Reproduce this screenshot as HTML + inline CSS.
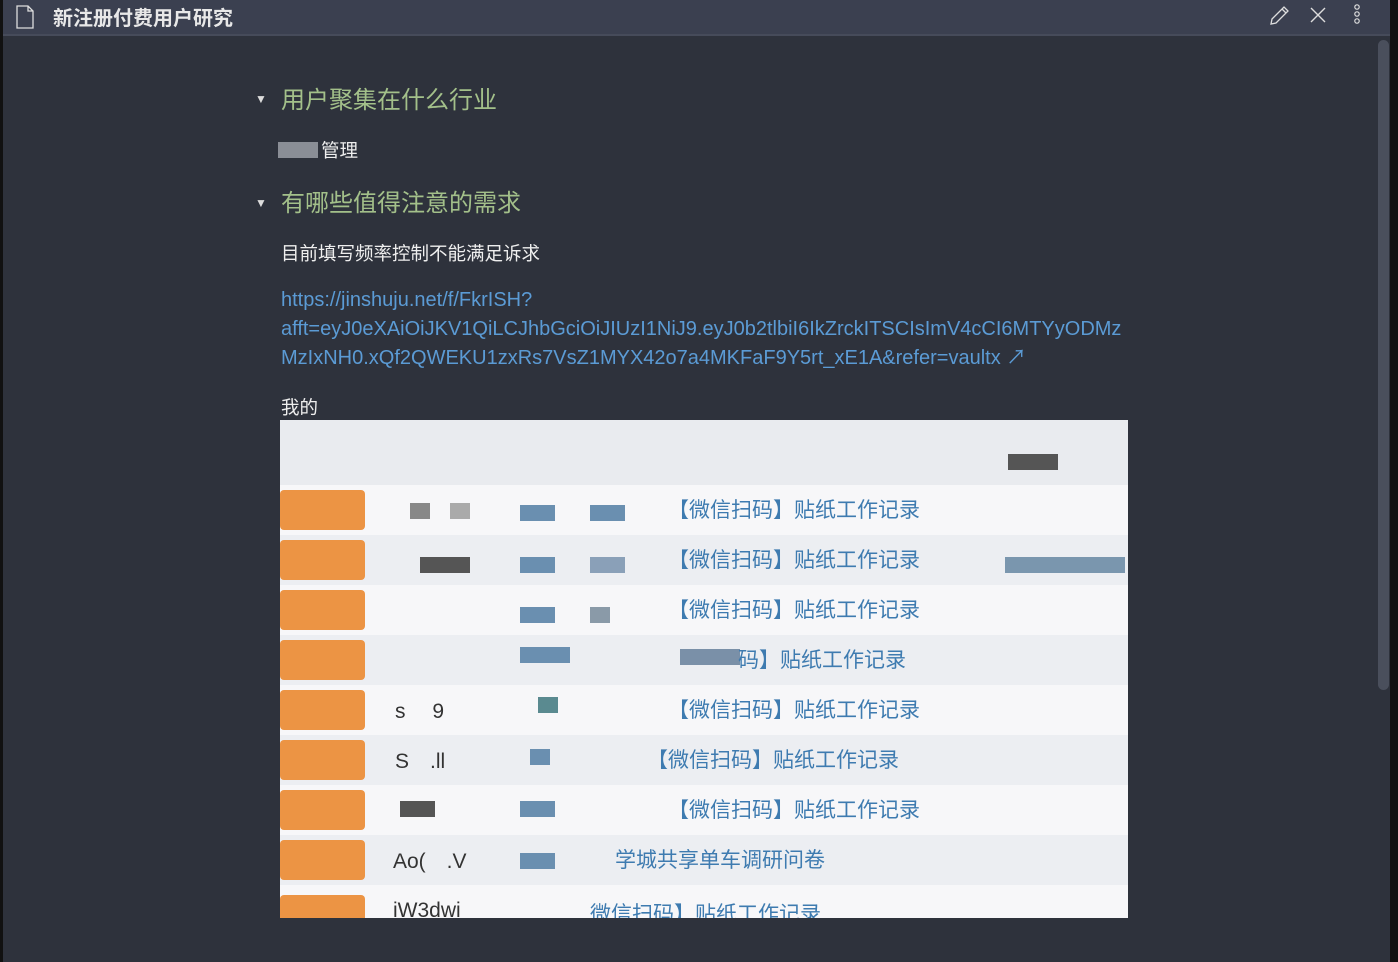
<!DOCTYPE html>
<html><head><meta charset="utf-8"><style>
*{margin:0;padding:0;box-sizing:border-box}
body{width:1398px;height:962px;background:#2e323c;font-family:"Liberation Sans","Noto Sans CJK SC",sans-serif;position:relative;overflow:hidden}
.hdr{position:absolute;left:3px;top:0;width:1387px;height:36px;background:#3b4050;border-bottom:2px solid #464b5a}
.title{position:absolute;left:50px;top:2px;color:#e8e8e8;font-size:20px;font-weight:bold}
.lstrip{position:absolute;left:0;top:0;width:3px;height:962px;background:#111}
.rstrip{position:absolute;right:0;top:0;width:8px;height:962px;background:#111}
.sb{position:absolute;left:1378px;top:40px;width:11px;height:650px;background:#4a4f5c;border-radius:6px}
.h{position:absolute;color:#a3c08a;font-size:24px}
.tri{position:absolute;color:#ddd;font-size:12px}
.t{position:absolute;color:#eee;font-size:18.5px}
.lnk{position:absolute;left:281px;top:286px;color:#5b9bd5;font-size:20px;line-height:29px;width:900px}
.tbl{position:absolute;left:280px;top:420px;width:848px;height:498px;background:#f4f5f7;overflow:hidden}
.row{position:absolute;left:0;width:848px;height:50px}
.cell{position:absolute;color:#3e7bb0;font-size:21px}
.or{position:absolute;left:0;width:85px;height:40px;background:#ec9444;border-radius:4px}
.px{position:absolute;width:20px;height:16px}
</style></head><body>
<div class="lstrip"></div>
<div class="hdr">
<svg style="position:absolute;left:12px;top:5px" width="20" height="24" viewBox="0 0 20 24"><path d="M2 1h11l5 5v17H2z M13 1v5h5" fill="none" stroke="#ddd" stroke-width="1.3"/></svg>
<div class="title">新注册付费用户研究</div>
<svg style="position:absolute;left:1265px;top:5px" width="22" height="22" viewBox="0 0 22 22"><path d="M3 19l1-5L16 2l4 4L8 18z M14 4l4 4" fill="none" stroke="#ddd" stroke-width="1.3"/></svg>
<svg style="position:absolute;left:1306px;top:6px" width="18" height="18" viewBox="0 0 18 18"><path d="M2 2l14 14M16 2L2 16" stroke="#ddd" stroke-width="1.4"/></svg>
<svg style="position:absolute;left:1349px;top:4px" width="10" height="22" viewBox="0 0 10 22"><circle cx="5" cy="3" r="2.2" fill="none" stroke="#ddd" stroke-width="1.2"/><circle cx="5" cy="10" r="2.2" fill="none" stroke="#ddd" stroke-width="1.2"/><circle cx="5" cy="17" r="2.2" fill="none" stroke="#ddd" stroke-width="1.2"/></svg>
</div>
<div class="rstrip"></div>
<div class="sb"></div>
<div class="tri" style="left:255px;top:92px">▼</div>
<div class="h" style="left:281px;top:80px">用户聚集在什么行业</div>
<div style="position:absolute;left:278px;top:142px;width:40px;height:16px;background:#8a8e96"></div>
<div class="t" style="left:321px;top:137px">管理</div>
<div class="tri" style="left:255px;top:196px">▼</div>
<div class="h" style="left:281px;top:183px">有哪些值得注意的需求</div>
<div class="t" style="left:281px;top:240px">目前填写频率控制不能满足诉求</div>
<div class="lnk">https://jinshuju.net/f/FkrISH?<br>afft=eyJ0eXAiOiJKV1QiLCJhbGciOiJIUzI1NiJ9.eyJ0b2tlbiI6IkZrckITSCIsImV4cCI6MTYyODMz<br>MzIxNH0.xQf2QWEKU1zxRs7VsZ1MYX42o7a4MKFaF9Y5rt_xE1A&amp;refer=vaultx ↗</div>
<div class="t" style="left:281px;top:394px">我的</div>
<div class="tbl">
<div style="position:absolute;left:0;top:0;width:848px;height:65px;background:#e9ebef"></div>
<div class="px" style="left:728px;top:34px;width:50px;background:#555"></div>
<div class="row" style="top:65px;background:#f7f7f9"><div class="or" style="top:5px"></div><div class="px" style="left:130px;top:18px;background:#888"></div><div class="px" style="left:170px;top:18px;background:#aaa"></div><div class="px" style="left:240px;top:20px;width:35px;background:#6a8fb0"></div><div class="px" style="left:310px;top:20px;width:35px;background:#6a8fb0"></div><div class="cell" style="left:388px;top:9px">【微信扫码】贴纸工作记录</div></div>
<div class="row" style="top:115px;background:#eceef2"><div class="or" style="top:5px"></div><div class="px" style="left:140px;top:22px;width:50px;background:#555"></div><div class="px" style="left:240px;top:22px;width:35px;background:#6a8fb0"></div><div class="px" style="left:310px;top:22px;width:35px;background:#8aa0b8"></div><div class="cell" style="left:388px;top:9px">【微信扫码】贴纸工作记录</div><div class="px" style="left:725px;top:22px;width:120px;background:#7a96ae"></div></div>
<div class="row" style="top:165px;background:#f7f7f9"><div class="or" style="top:5px"></div><div class="px" style="left:240px;top:22px;width:35px;background:#6a8fb0"></div><div class="px" style="left:310px;top:22px;width:20px;background:#8a9aa8"></div><div class="cell" style="left:388px;top:9px">【微信扫码】贴纸工作记录</div></div>
<div class="row" style="top:215px;background:#eceef2"><div class="or" style="top:5px"></div><div class="px" style="left:240px;top:12px;width:50px;background:#6a8fb0"></div><div class="px" style="left:400px;top:14px;width:60px;background:#7a90a8"></div><div class="cell" style="left:458px;top:9px">码】贴纸工作记录</div></div>
<div class="row" style="top:265px;background:#f7f7f9"><div class="or" style="top:5px"></div><div class="cell" style="left:115px;top:10px;color:#333">s　 9</div><div class="px" style="left:258px;top:12px;background:#5a8a90"></div><div class="cell" style="left:388px;top:9px">【微信扫码】贴纸工作记录</div></div>
<div class="row" style="top:315px;background:#eceef2"><div class="or" style="top:5px"></div><div class="cell" style="left:115px;top:10px;color:#333">S　.ll</div><div class="px" style="left:250px;top:14px;background:#6a8fb0"></div><div class="cell" style="left:367px;top:9px">【微信扫码】贴纸工作记录</div></div>
<div class="row" style="top:365px;background:#f7f7f9"><div class="or" style="top:5px"></div><div class="px" style="left:120px;top:16px;width:35px;background:#555"></div><div class="px" style="left:240px;top:16px;width:35px;background:#6a8fb0"></div><div class="cell" style="left:388px;top:9px">【微信扫码】贴纸工作记录</div></div>
<div class="row" style="top:415px;background:#eceef2"><div class="or" style="top:5px"></div><div class="cell" style="left:113px;top:10px;color:#333">Ao(　.V</div><div class="px" style="left:240px;top:18px;width:35px;background:#6a8fb0"></div><div class="cell" style="left:335px;top:9px">学城共享单车调研问卷</div></div>
<div class="row" style="top:465px;background:#f7f7f9"><div class="or" style="top:10px"></div><div class="cell" style="left:113px;top:14px;color:#333">iW3dwi</div><div class="cell" style="left:310px;top:13px">微信扫码】贴纸工作记录</div></div>
</div>
</body></html>
